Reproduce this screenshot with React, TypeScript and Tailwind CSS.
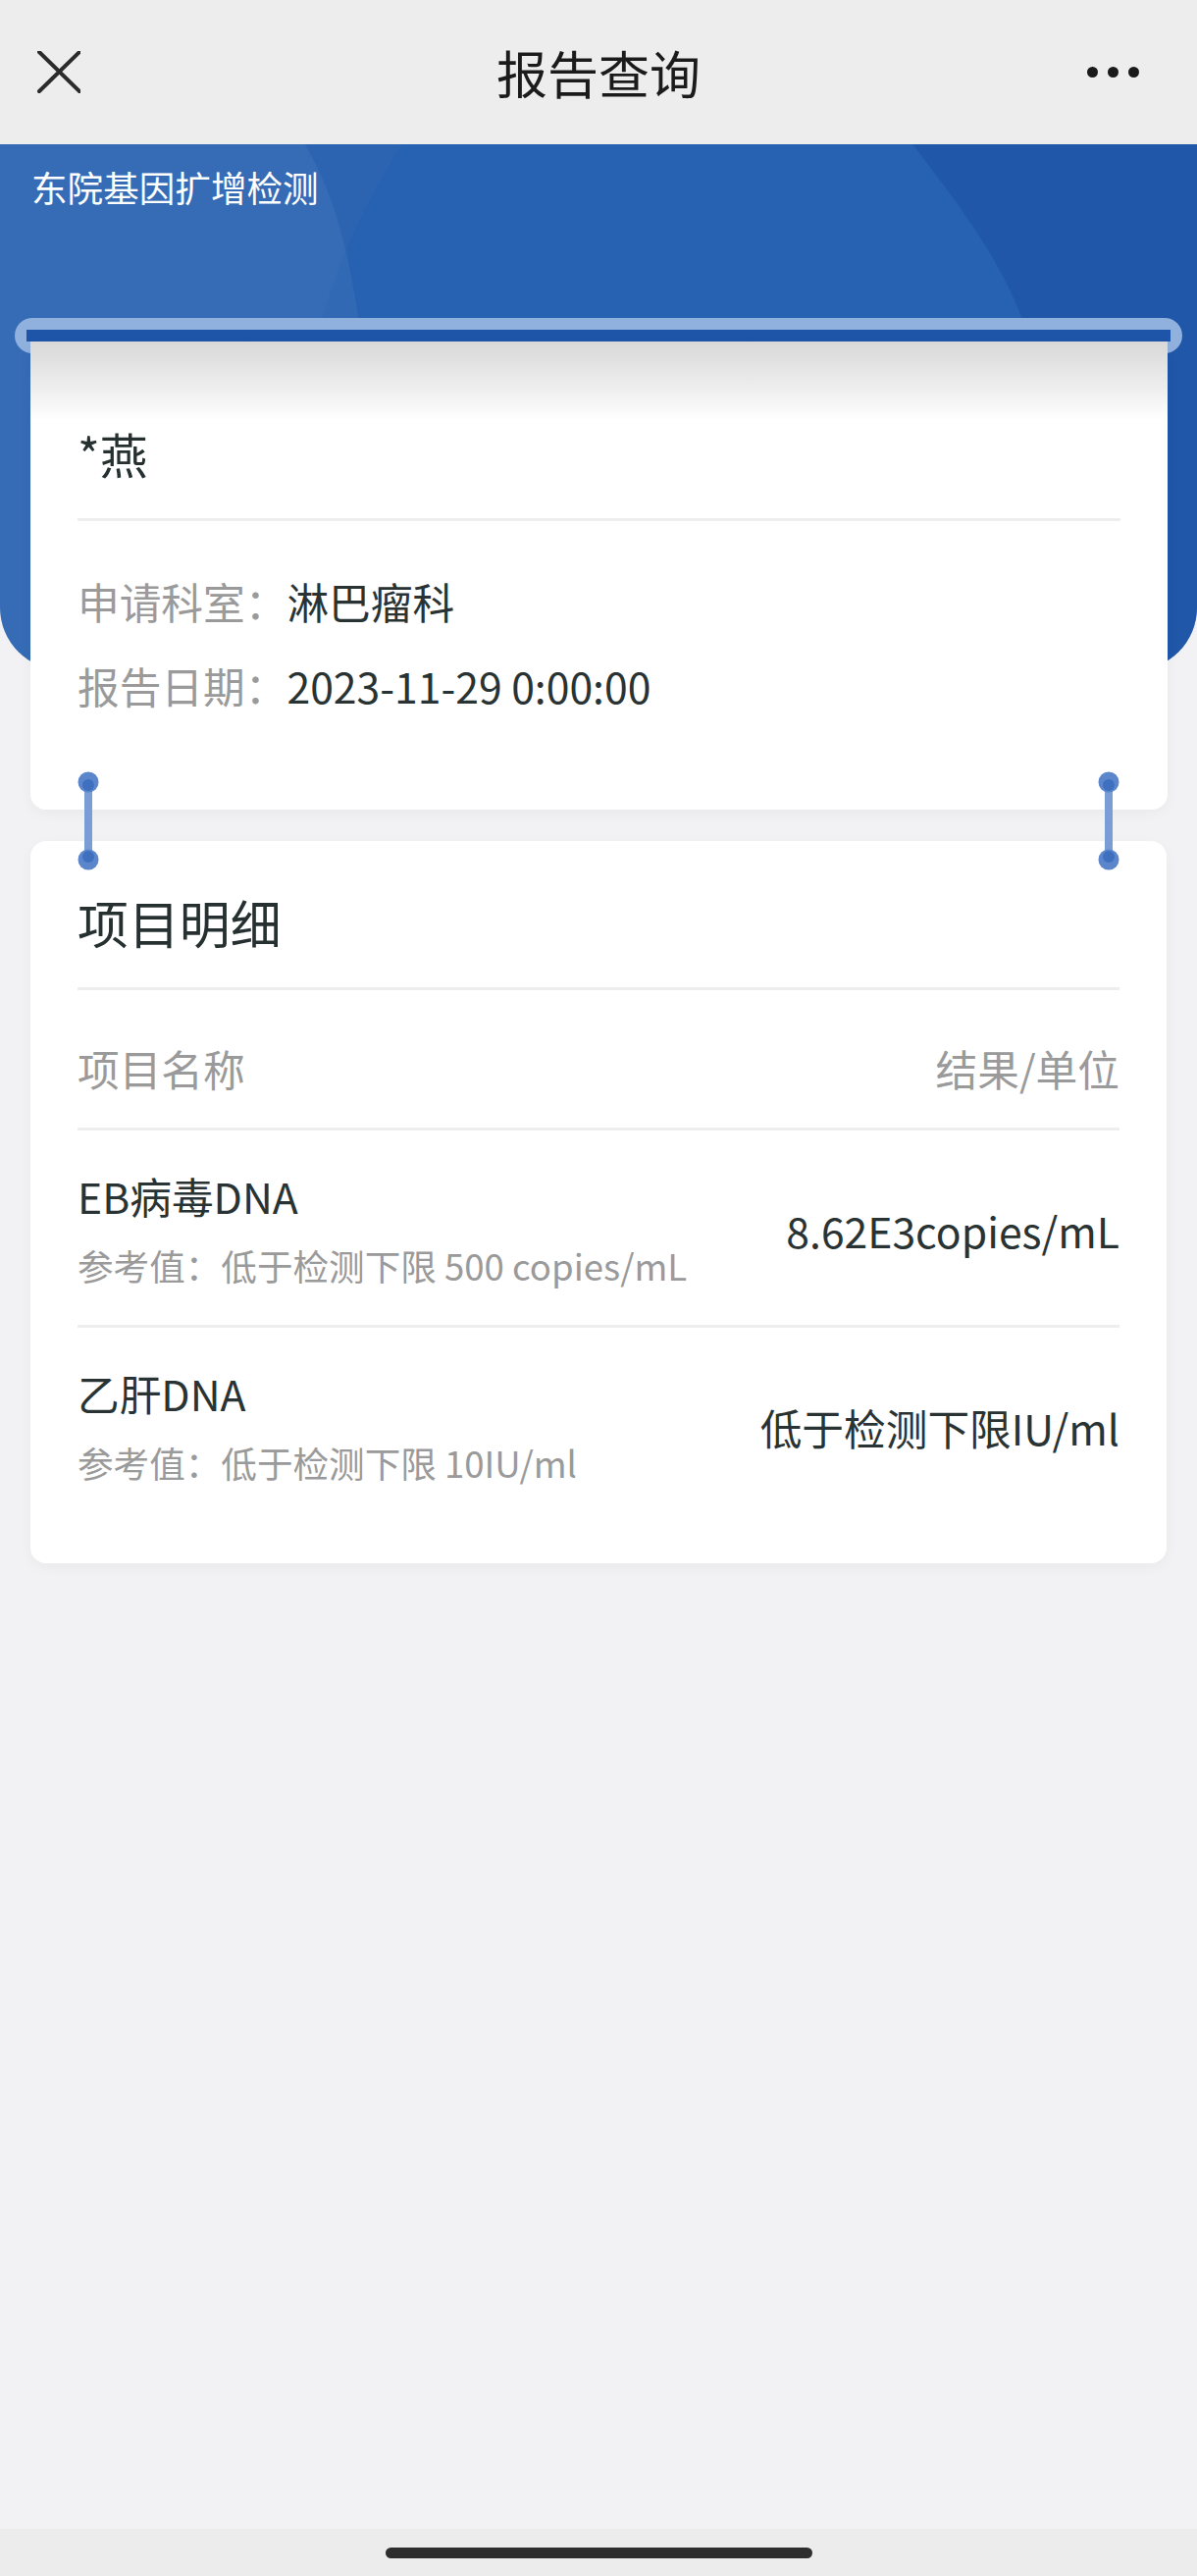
import React from "react";

const font = "font-['Noto_Sans_CJK_SC','Noto_Sans',sans-serif]";

function Ring({ className }: { className: string }) {
  return (
    <svg className={className} width="24" height="104" viewBox="0 0 24 104">
      <rect x="8" y="12" width="8" height="80" fill="#7a9dd6" />
      <circle cx="12" cy="12" r="10.5" fill="#5b86cc" />
      <circle cx="12" cy="15" r="6" fill="#3f70c0" />
      <circle cx="12" cy="91" r="10.5" fill="#5b86cc" />
      <circle cx="12" cy="88" r="6" fill="#3f70c0" />
    </svg>
  );
}

function Divider() {
  return <div className="h-[3px] bg-[#eeeeee]" />;
}

function ItemRow({ name, refText, result, last }: { name: string; refText: string; result: string; last?: boolean }) {
  return (
    <div className={`flex items-center justify-between pt-[45px] ${last ? "" : "pb-[42px]"}`}>
      <div className="flex flex-col">
        <div className="text-[42.7px] leading-[42px] text-[#2a3333]">{name}</div>
        <div className="mt-[33px] text-[36.6px] leading-[36px] text-[#9a9a9a]">{refText}</div>
      </div>
      <div className="text-[42.7px] leading-[42px] text-[#2a3333]">{result}</div>
    </div>
  );
}

export default function App() {
  return (
    <div className={`${font} flex h-[2625px] w-[1220px] flex-col bg-[#f2f2f4]`}>
      {/* Nav bar */}
      <div className="grid h-[147px] shrink-0 grid-cols-[1fr_auto_1fr] items-center bg-[#ededed]">
        <div className="pl-[38px]">
          <svg width="44" height="44" viewBox="0 0 44 44">
            <path d="M2 1 L43 41 M43 1 L2 41" stroke="#2b2b2b" strokeWidth="4" strokeLinecap="round" />
          </svg>
        </div>
        <div className="text-[52px] leading-[52px] text-[#1b1b1b]">报告查询</div>
        <div className="flex justify-end gap-[10px] pr-[59px]">
          <span className="h-[11px] w-[11px] rounded-full bg-[#1a1a1a]" />
          <span className="h-[11px] w-[11px] rounded-full bg-[#1a1a1a]" />
          <span className="h-[11px] w-[11px] rounded-full bg-[#1a1a1a]" />
        </div>
      </div>

      {/* Blue header */}
      <div className="relative h-[536px] shrink-0 overflow-hidden rounded-b-[64px] bg-[#2761b1]">
        <svg className="absolute inset-0" width="1220" height="536" viewBox="0 0 1220 536" preserveAspectRatio="none">
          <path d="M0 0 H311 C350 70 378 150 392 536 H0 Z" fill="#ffffff" opacity="0.05" />
          <path d="M410 0 C340 110 292 230 282 536 H0 V0 Z" fill="#ffffff" opacity="0.025" />
          <path d="M930 0 C1000 90 1050 160 1062 260 C1072 340 1076 430 1080 536 H1220 V0 Z" fill="#1a4da2" opacity="0.5" />
        </svg>
        <div className="relative pl-[32px] pt-[26px] text-[36.6px] leading-[36px] text-white">东院基因扩增检测</div>
      </div>

      {/* Scroll content */}
      <div className="relative mt-[-359px] flex flex-col">
        <div className="mx-[15px] h-[36px] rounded-full bg-[#90b0dd]" />
        <div className="relative mx-[27px] mt-[-24px] flex flex-col">
          <div className="h-[12px] bg-[#1f55a8]" />
          <div className="ml-[4px] mr-[3px] h-[477px] rounded-b-[16px] bg-[linear-gradient(to_bottom,#d8d8d8,#f4f4f4_60px,#ffffff_80px)] px-[48px] shadow-[0_4px_14px_rgba(0,0,0,0.04)]">
            <div className="pt-[90px] text-[48.8px] leading-[48px] text-[#263030]">*燕</div>
            <div className="mt-[42px]">
              <Divider />
            </div>
            <div className="mt-[60px] text-[42.7px] leading-[42px]">
              <span className="text-[#9a9a9a]">申请科室：</span>
              <span className="text-[#2a3333]">淋巴瘤科</span>
            </div>
            <div className="mt-[44px] text-[42.7px] leading-[42px]">
              <span className="text-[#9a9a9a]">报告日期：</span>
              <span className="text-[#2a3333]">2023-11-29 0:00:00</span>
            </div>
          </div>
        </div>

        {/* Second card */}
        <div className="mx-[31px] mt-[32px] rounded-[16px] bg-white px-[48px] pb-[84px] shadow-[0_4px_14px_rgba(0,0,0,0.04)]">
          <div className="pt-[57px] text-[51.9px] leading-[52px] text-[#263030]">项目明细</div>
          <div className="mt-[40px]">
            <Divider />
          </div>
          <div className="flex justify-between pt-[58px] pb-[40px] text-[42.7px] leading-[42px] text-[#9a9a9a]">
            <span>项目名称</span>
            <span>结果/单位</span>
          </div>
          <Divider />
          <ItemRow name="EB病毒DNA" refText="参考值：低于检测下限 500 copies/mL" result="8.62E3copies/mL" />
          <Divider />
          <ItemRow name="乙肝DNA" refText="参考值：低于检测下限 10IU/ml" result="低于检测下限IU/ml" last />
        </div>

        <Ring className="absolute left-[78px] top-[461px]" />
        <Ring className="absolute left-[1118px] top-[461px]" />
      </div>

      <div className="flex-1" />

      {/* Bottom home indicator */}
      <div className="flex h-[48px] shrink-0 items-start justify-center bg-[#ececec] pt-[19px]">
        <div className="h-[11px] w-[435px] rounded-full bg-[#2e2e2e]" />
      </div>
    </div>
  );
}
